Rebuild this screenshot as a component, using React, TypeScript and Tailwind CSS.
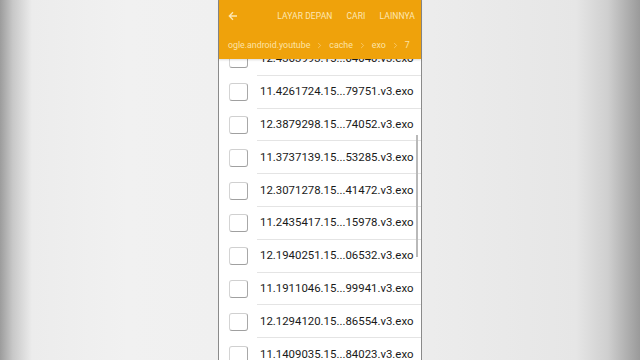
import { ChevronRight } from 'lucide-react';

const FILES = [
  '12.4363993.15...04040.v3.exo',
  '11.4261724.15...79751.v3.exo',
  '12.3879298.15...74052.v3.exo',
  '11.3737139.15...53285.v3.exo',
  '12.3071278.15...41472.v3.exo',
  '11.2435417.15...15978.v3.exo',
  '12.1940251.15...06532.v3.exo',
  '11.1911046.15...99941.v3.exo',
  '12.1294120.15...86554.v3.exo',
  '11.1409035.15...84023.v3.exo',
];

const CRUMBS = ['ogle.android.youtube', 'cache', 'exo', '7'];

export default function App() {
  return (
    <div className="flex h-[360px] w-[640px] justify-center overflow-hidden bg-[linear-gradient(to_right,#9c9c9c_0%,#c8c8c8_2%,#ececec_5%,#f1f1f1_20%,#eeeeee_60%,#e6e6e6_90%,#cfcfcf_95%,#9a9a9a_100%)] font-['Roboto',sans-serif]">
      {/* Phone screen */}
      <div className="relative flex h-full w-[204px] flex-col border-x border-[#8a8a8a] bg-white">
        {/* Header */}
        <header className="z-10 flex h-[59px] shrink-0 flex-col bg-[#efa20b] shadow-[0_1px_2px_rgba(0,0,0,0.15)]">
          <div className="flex h-[32px] items-center pl-[9px] pr-[6px]">
            <svg width="10" height="10" viewBox="0 0 10 10" className="text-[#fde7b4]">
              <path d="M9 5H1.5M5 1.3L1.3 5 5 8.7" fill="none" stroke="currentColor" strokeWidth="1.3" />
            </svg>
            <div className="ml-auto flex items-center gap-[14px] text-[8.5px] tracking-[0.1px] text-[#fde7b4]">
              <span>LAYAR DEPAN</span>
              <span>CARI</span>
              <span>LAINNYA</span>
            </div>
          </div>
          <div className="flex h-[27px] items-center gap-[5px] overflow-hidden whitespace-nowrap pl-[9px] text-[8.8px] text-[#fde3a6]">
            {CRUMBS.map((c, i) => (
              <span key={c} className="flex items-center gap-[5px]">
                {i > 0 && <ChevronRight size={9} strokeWidth={1.6} className="text-[#fbdc99]" />}
                <span>{c}</span>
              </span>
            ))}
          </div>
        </header>

        {/* File list */}
        <div className="relative flex-1 overflow-hidden">
          <div className="mt-[-16px]">
            {FILES.map((f) => (
              <div key={f} className="flex h-[32.8px] items-center">
                <div className="flex w-[38px] shrink-0 justify-center pl-[1px]">
                  <div className="h-[18px] w-[19px] rounded-[3px] border-[1.5px] border-l-[#d4d4d4] border-t-[#d0d0d0] border-r-[#a8a8a8] border-b-[#a0a0a0] bg-white" />
                </div>
                <div className="flex h-full flex-1 items-center border-b border-[#e4e4e4] pl-[3px] text-[11.4px] text-[#1a1a1a]">
                  {f}
                </div>
              </div>
            ))}
          </div>
          <div className="absolute right-[3px] top-[76px] h-[122px] w-[2px] bg-[#b9b9b9]" />
        </div>
      </div>
    </div>
  );
}
